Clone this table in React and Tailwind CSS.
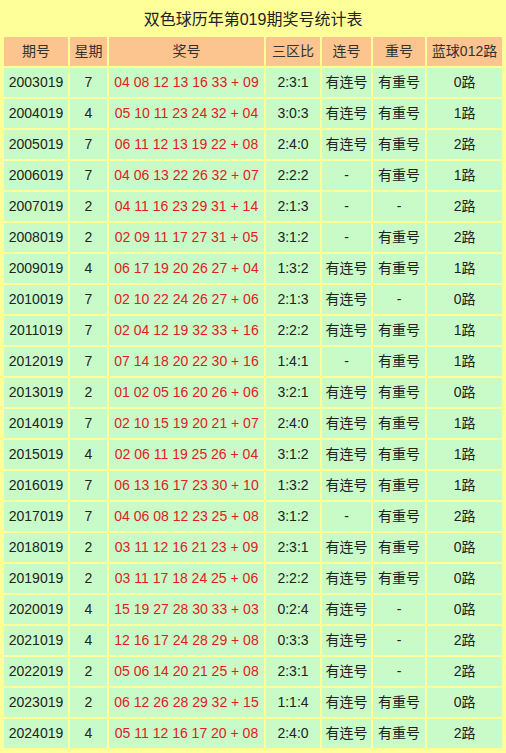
import React from 'react'

const rows = [
    ['2003019', '7', '04 08 12 13 16 33 + 09', '2:3:1', '有连号', '有重号', '0路'],
    ['2004019', '4', '05 10 11 23 24 32 + 04', '3:0:3', '有连号', '有重号', '1路'],
    ['2005019', '7', '06 11 12 13 19 22 + 08', '2:4:0', '有连号', '有重号', '2路'],
    ['2006019', '7', '04 06 13 22 26 32 + 07', '2:2:2', '-', '有重号', '1路'],
    ['2007019', '2', '04 11 16 23 29 31 + 14', '2:1:3', '-', '-', '2路'],
    ['2008019', '2', '02 09 11 17 27 31 + 05', '3:1:2', '-', '有重号', '2路'],
    ['2009019', '4', '06 17 19 20 26 27 + 04', '1:3:2', '有连号', '有重号', '1路'],
    ['2010019', '7', '02 10 22 24 26 27 + 06', '2:1:3', '有连号', '-', '0路'],
    ['2011019', '7', '02 04 12 19 32 33 + 16', '2:2:2', '有连号', '有重号', '1路'],
    ['2012019', '7', '07 14 18 20 22 30 + 16', '1:4:1', '-', '有重号', '1路'],
    ['2013019', '2', '01 02 05 16 20 26 + 06', '3:2:1', '有连号', '有重号', '0路'],
    ['2014019', '7', '02 10 15 19 20 21 + 07', '2:4:0', '有连号', '有重号', '1路'],
    ['2015019', '4', '02 06 11 19 25 26 + 04', '3:1:2', '有连号', '有重号', '1路'],
    ['2016019', '7', '06 13 16 17 23 30 + 10', '1:3:2', '有连号', '有重号', '1路'],
    ['2017019', '7', '04 06 08 12 23 25 + 08', '3:1:2', '-', '有重号', '2路'],
    ['2018019', '2', '03 11 12 16 21 23 + 09', '2:3:1', '有连号', '有重号', '0路'],
    ['2019019', '2', '03 11 17 18 24 25 + 06', '2:2:2', '有连号', '有重号', '0路'],
    ['2020019', '4', '15 19 27 28 30 33 + 03', '0:2:4', '有连号', '-', '0路'],
    ['2021019', '4', '12 16 17 24 28 29 + 08', '0:3:3', '有连号', '-', '2路'],
    ['2022019', '2', '05 06 14 20 21 25 + 08', '2:3:1', '有连号', '-', '2路'],
    ['2023019', '2', '06 12 26 28 29 32 + 15', '1:1:4', '有连号', '有重号', '0路'],
    ['2024019', '4', '05 11 12 16 17 20 + 08', '2:4:0', '有连号', '有重号', '2路'],
]

const heads = ['期号', '星期', '奖号', '三区比', '连号', '重号', '蓝球012路']

const App = () => {
    return (
        <div className="w-[506px] h-[753px] bg-[#ffff99] p-[2px] font-['Liberation_Sans','Noto_Sans_CJK_SC',sans-serif] text-[#222]">
            <table className="w-[502px] table-fixed border-separate border-spacing-[2px]">
                <colgroup>
                    <col className="w-[64px]" />
                    <col className="w-[37px]" />
                    <col className="w-[155px]" />
                    <col className="w-[54px]" />
                    <col className="w-[49px]" />
                    <col className="w-[52px]" />
                    <col className="w-[75px]" />
                </colgroup>
                <thead>
                    <tr>
                        <th colSpan={7} className="h-[31px] p-0 pt-[1px] text-[16px] font-normal text-center align-middle">
                            双色球历年第019期奖号统计表
                        </th>
                    </tr>
                    <tr>
                        {heads.map((h) => (
                            <th key={h} className="h-[29px] p-0 bg-[#fcc48f] text-[14px] font-normal text-[#333] text-center align-middle whitespace-nowrap">
                                {h}
                            </th>
                        ))}
                    </tr>
                </thead>
                <tbody>
                    {rows.map((r) => (
                        <tr key={r[0]}>
                            <td className="h-[29px] p-0 bg-[#c9fbc9] text-[14px] text-center align-middle">{r[0]}</td>
                            <td className="h-[29px] p-0 bg-[#c9fbc9] text-[14px] text-center align-middle">{r[1]}</td>
                            <td className="h-[29px] p-0 bg-[#c9fbc9] text-[14px] text-[#e0201c] text-center align-middle whitespace-nowrap">{r[2]}</td>
                            <td className="h-[29px] p-0 bg-[#c9fbc9] text-[14px] text-center align-middle">{r[3]}</td>
                            <td className="h-[29px] p-0 bg-[#c9fbc9] text-[14px] text-center align-middle">{r[4]}</td>
                            <td className="h-[29px] p-0 bg-[#c9fbc9] text-[14px] text-center align-middle">{r[5]}</td>
                            <td className="h-[29px] p-0 bg-[#c9fbc9] text-[14px] text-center align-middle">{r[6]}</td>
                        </tr>
                    ))}
                </tbody>
            </table>
        </div>
    )
}

export default App
